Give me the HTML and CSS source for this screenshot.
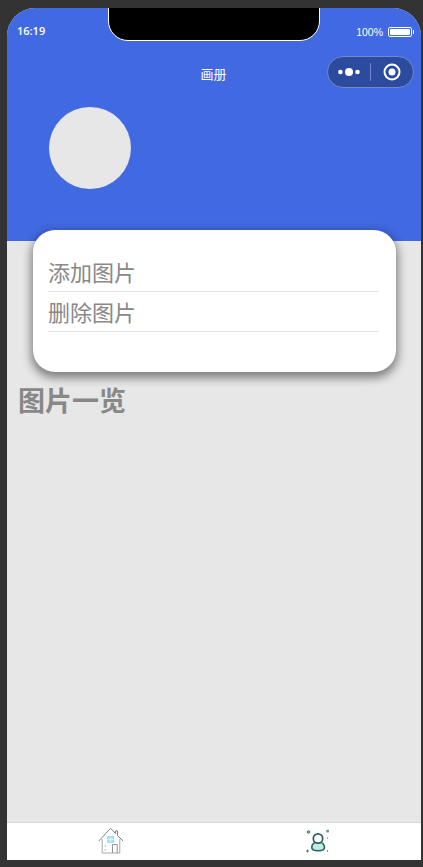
FILE: index.html
```html
<!DOCTYPE html>
<html lang="zh-CN">

<head>
    <meta charset="UTF-8">
    <meta name="viewport" content="width=device-width, initial-scale=1.0">
    <title>画册</title>
    <link rel="stylesheet" href="styles.css">
</head>

<body>
    <div class="phone">
        <div class="notch"></div>
        <div class="top">
            <div class="status">
                <span class="time">16:19</span>
                <div class="power">
                    <span>100%</span>
                    <div class="battery"><i></i></div>
                </div>
            </div>
            <div class="nav">
                <span class="title">画册</span>
                <div class="capsule">
                    <svg class="more" width="22" height="8" viewBox="0 0 22 8">
                        <circle cx="2.400" cy="4" r="2.300" fill="#fff"/>
                        <circle cx="11" cy="4" r="4" fill="#fff"/>
                        <circle cx="19.500" cy="4" r="2.300" fill="#fff"/>
                    </svg>
                    <span class="split"></span>
                    <svg class="close" width="18" height="18" viewBox="0 0 18 18">
                        <circle cx="9" cy="9" r="7.500" fill="none" stroke="#fff" stroke-width="2"/>
                        <circle cx="9" cy="9" r="3.500" fill="#fff"/>
                    </svg>
                </div>
            </div>
            <div class="avatar"></div>
        </div>
        <div class="content">
            <div class="card">
                <div class="row">添加图片</div>
                <div class="row">删除图片</div>
            </div>
            <h2 class="list-title">图片一览</h2>
        </div>
        <div class="tabbar">
            <div class="tab">
                <svg width="28" height="28" viewBox="0 0 28 28">
                    <path d="M1.800 14 L13.500 1.300 L18.500 6.500 V4 H20.500 V8.700 L26.200 14" fill="none" stroke="#7f868c" stroke-width="1"/>
                    <path d="M5.200 12 V26 H22.800 V12" fill="none" stroke="#a4a8ac" stroke-width="1"/>
                    <rect x="10.800" y="9.700" width="6" height="5.600" fill="#a5e3f2" stroke="#6fcbe3" stroke-width=".6"/>
                    <path d="M13.800 9.700 V15.300 M10.800 12.500 H16.800" stroke="#fff" stroke-width=".6"/>
                    <path d="M15.500 26 V17.500 H20.200 V26" fill="none" stroke="#8f9498" stroke-width="1"/>
                    <path d="M7.500 19 H9 M7.500 23 H9" stroke="#a4a8ac" stroke-width="1"/>
                </svg>
            </div>
            <div class="tab">
                <svg width="28" height="28" viewBox="0 0 28 28">
                    <circle cx="4.500" cy="5" r="1.300" fill="#8fb0ad" stroke="#2f5f5c" stroke-width=".8"/>
                    <rect x="22.300" y="2.800" width="2.600" height="2.600" fill="#6f8f8d"/>
                    <path d="M2 24 H5 M3.500 22.500 V25.500" stroke="#2f5f5c" stroke-width=".8"/>
                    <circle cx="23.500" cy="11" r=".6" fill="#2f5f5c"/>
                    <circle cx="23.500" cy="24" r=".7" fill="#2f5f5c"/>
                    <path d="M7.800 20.500 C7.800 17 10.500 15 14 15 C17.500 15 20.500 17 20.500 20.500 C20.500 23.300 18 23.800 14 23.800 C10 23.800 7.800 23.300 7.800 20.500 Z" fill="#bdeee6" stroke="#2f5f5c" stroke-width="1.600"/>
                    <circle cx="14" cy="11.500" r="4.700" fill="#fff" stroke="#2f5f5c" stroke-width="1.700"/>
                </svg>
            </div>
        </div>
    </div>
</body>

</html>
```

FILE: styles.css
```css
* {
    margin: 0;
    padding: 0;
    box-sizing: border-box;
}
body {
    height: 867px;
    background-color: #333;
    padding: 8px 2px 7px 7px;
    overflow: hidden;
    font-family: "Liberation Sans", "Noto Sans CJK SC", sans-serif;
}
.phone {
    position: relative;
    display: flex;
    flex-direction: column;
    width: 414px;
    height: 852px;
    border-radius: 28px 28px 0 0;
    overflow: hidden;
    background-color: #e7e7e7;
}
.notch {
    position: absolute;
    top: -1px;
    left: 101px;
    width: 212px;
    height: 34px;
    background-color: #000;
    border: 1px solid #fff;
    border-radius: 0 0 20px 20px;
}

/* 顶部蓝色区域 */
.top {
    height: 233px;
    flex: none;
    background-color: #4169e1;
    color: #fff;
}
.status {
    display: flex;
    justify-content: space-between;
    align-items: center;
    height: 34px;
    padding: 10px 9px 0 10px;
}
.time {
    font-family: "Open Sans", sans-serif;
    font-size: 11px;
    font-weight: 600;
}
.power {
    display: flex;
    align-items: center;
    gap: 5px;
    margin-top: 4px;
    font-size: 10.500px;
}
.battery {
    position: relative;
    width: 24px;
    height: 10px;
    border: 1px solid #fff;
    border-radius: 2px;
    padding: 1px;
}
.battery i {
    display: block;
    height: 100%;
    background-color: #fff;
    border-radius: 1px;
}
.battery::after {
    content: '';
    position: absolute;
    top: 2px;
    right: -3px;
    width: 1px;
    height: 4px;
    background-color: #fff;
}
.nav {
    position: relative;
    display: flex;
    justify-content: center;
    align-items: center;
    height: 32px;
    margin-top: 14px;
}
.title {
    padding: 2px 1px 0 0;
    font-size: 13px;
}
.capsule {
    position: absolute;
    top: 0;
    right: 7px;
    display: flex;
    align-items: center;
    width: 87px;
    height: 32px;
    padding-left: 10px;
    background-color: #2c4a9e;
    border: 1px solid #7189c9;
    border-radius: 16px;
}
.split {
    width: 1px;
    height: 18px;
    margin: 0 12px 0 10px;
    background-color: #7189c9;
}
.avatar {
    width: 82px;
    height: 82px;
    margin: 19px 0 0 42px;
    border-radius: 50%;
    background-color: #e7e7e7;
}

/* 卡片 */
.content {
    flex: 1;
    padding-top: 1px;
}
.card {
    width: 363px;
    height: 142px;
    margin: -12px 0 0 26px;
    padding: 22px 17px 0 15px;
    position: relative;
    background-color: #fff;
    border-radius: 22px;
    box-shadow: 0 4px 10px 2px rgba(0, 0, 0, .45);
}
.row {
    height: 40px;
    line-height: 44px;
    border-bottom: 1px solid #e5e5e5;
    font-size: 22px;
    color: #888;
}
.list-title {
    margin: 10px 0 0 11px;
    font-size: 27px;
    line-height: 40px;
    color: #888;
}

/* 底部 */
.tabbar {
    display: flex;
    flex: none;
    height: 38px;
    padding-top: 4px;
    background-color: #fff;
    border-top: 1px solid #d9d9d9;
}
.tab {
    flex: 1;
    display: flex;
    justify-content: center;
}
```
